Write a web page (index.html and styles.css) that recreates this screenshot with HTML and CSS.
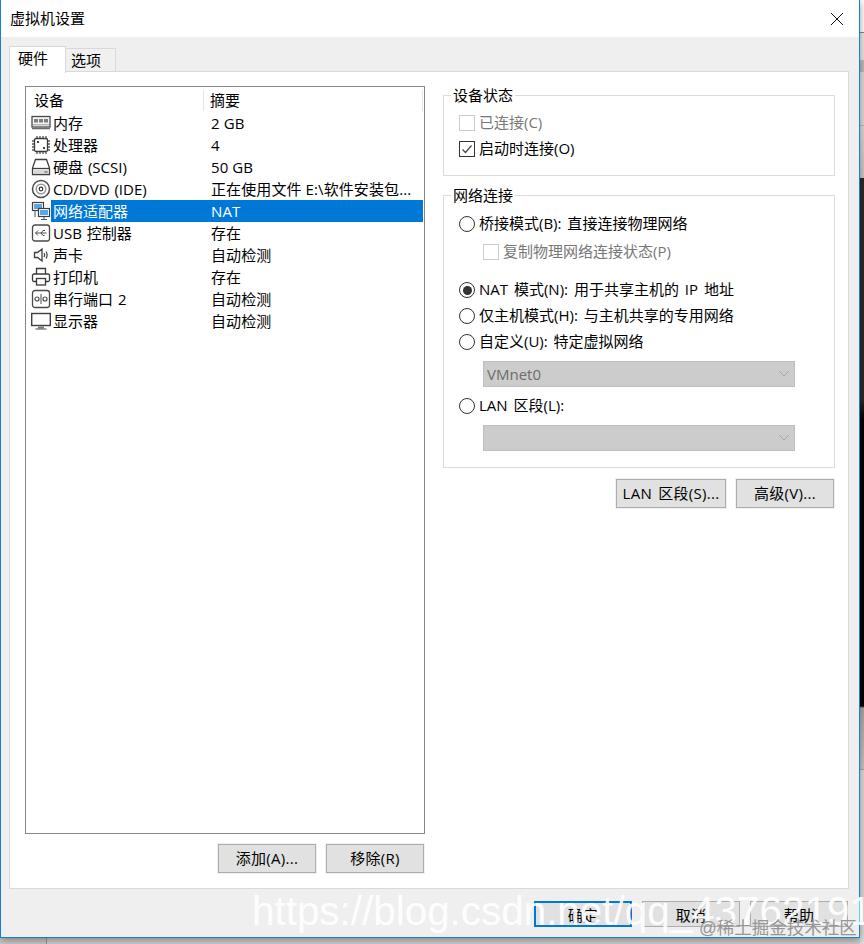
FILE: index.html
```html
<!DOCTYPE html>
<html lang="zh-CN">
<head>
<meta charset="utf-8">
<title>虚拟机设置</title>
<link rel="stylesheet" href="styles.css">
</head>
<body>
<div class="desktop">
  <main class="window">
    <header class="titlebar">
      <span class="title">虚拟机设置</span>
      <svg class="close" width="14" height="14" viewBox="0 0 14 14"><path d="M1 1L13 13M13 1L1 13" stroke="#111" stroke-width="1" fill="none"/></svg>
    </header>
    <div class="dialog">
      <div class="tabs">
        <span class="tab active">硬件</span>
        <span class="tab">选项</span>
      </div>
      <section class="panel">
        <div class="left">
          <div class="list">
            <div class="list-head">
              <span class="col-device">设备</span>
              <span class="col-summary">摘要</span>
            </div>
            <div class="row">
              <svg class="ic" viewBox="0 0 20 20"><rect x="1" y="3.500" width="18" height="10.500" fill="#f4f4f4" stroke="#4a4a4a" stroke-width="1.300"/><path d="M3 6h4v3.500H3zM8 6h4v3.500H8zM13 6h4v3.500h-4z" fill="#7d7d7d"/><path d="M2 11.800h16" stroke="#9a9a9a"/><path d="M1 15.500h18" stroke="#6a6a6a" stroke-width="1.500"/></svg>
              <span class="name">内存</span><span class="sum">2 GB</span>
            </div>
            <div class="row">
              <svg class="ic" viewBox="0 0 20 20"><rect x="3.500" y="3.500" width="13" height="13" rx="1.500" fill="#fff" stroke="#3a3a3a" stroke-width="1.300"/><path d="M6 1v2M9 1v2M12 1v2M15 1v2M6 17v2M9 17v2M12 17v2M15 17v2M1 6h2M1 9h2M1 12h2M1 15h2M17 6h2M17 9h2M17 12h2M17 15h2" stroke="#555" stroke-width="1.300"/><path d="M6 6h2v2H6zM12 12h2v2h-2z" fill="#444"/></svg>
              <span class="name">处理器</span><span class="sum">4</span>
            </div>
            <div class="row">
              <svg class="ic" viewBox="0 0 20 20"><path d="M4.500 2.500h11L18.500 11v6.500h-17V11z" fill="#fff" stroke="#3f3f3f" stroke-width="1.300"/><path d="M1.500 11.500h17" stroke="#3f3f3f" stroke-width="1.300"/><path d="M2.500 13h15v3.500h-15z" fill="#d8d8d8"/><path d="M13.500 15h3" stroke="#555"/></svg>
              <span class="name">硬盘 (SCSI)</span><span class="sum">50 GB</span>
            </div>
            <div class="row">
              <svg class="ic" viewBox="0 0 20 20"><circle cx="10" cy="10" r="8.500" fill="#fff" stroke="#4a4a4a" stroke-width="1.500"/><circle cx="10" cy="10" r="4.800" fill="none" stroke="#9a9a9a" stroke-width="1.500"/><circle cx="10" cy="10" r="1.800" fill="none" stroke="#333" stroke-width="1.200"/></svg>
              <span class="name">CD/DVD (IDE)</span><span class="sum">正在使用文件 E:\软件安装包...</span>
            </div>
            <div class="row selected">
              <svg class="ic" viewBox="0 0 20 20"><rect x="1.500" y="1.500" width="11" height="8" fill="#fff" stroke="#3f3f3f" stroke-width="1.200"/><rect x="3" y="3" width="8" height="5" fill="#5aa5e6"/><rect x="7.500" y="7.500" width="11" height="8" fill="#fff" stroke="#3f3f3f" stroke-width="1.200"/><rect x="9" y="9" width="8" height="5" fill="#5aa5e6"/><path d="M13 16v2M10 18.500h6M4 10v6" stroke="#555"/></svg>
              <span class="name">网络适配器</span><span class="sum">NAT</span>
            </div>
            <div class="row">
              <svg class="ic" viewBox="0 0 20 20"><rect x="1.500" y="2" width="17" height="16" rx="2.500" fill="#fff" stroke="#4a4a4a" stroke-width="1.300"/><path d="M4.500 10h11M7 7.500L4.500 10 7 12.500M10 10l2-2.500h2M10 10l2 2.500h1.500" fill="none" stroke="#4a4a4a"/></svg>
              <span class="name">USB 控制器</span><span class="sum">存在</span>
            </div>
            <div class="row">
              <svg class="ic" viewBox="0 0 20 20"><path d="M3.500 7.500h3L11 4v12l-4.500-3.500h-3z" fill="#fff" stroke="#3f3f3f" stroke-width="1.300"/><path d="M13 8c.8 1.300.8 2.700 0 4M15 6.500c1.500 2.300 1.500 4.700 0 7" fill="none" stroke="#3f3f3f" stroke-width="1.200"/></svg>
              <span class="name">声卡</span><span class="sum">自动检测</span>
            </div>
            <div class="row">
              <svg class="ic" viewBox="0 0 20 20"><path d="M5.500 7V1.500h9V7" fill="#fff" stroke="#3a3a3a" stroke-width="1.300"/><rect x="1.500" y="7" width="17" height="7.500" rx="1.500" fill="#fff" stroke="#3a3a3a" stroke-width="1.300"/><rect x="5.500" y="11.500" width="9" height="6.500" fill="#fff" stroke="#3a3a3a" stroke-width="1.300"/></svg>
              <span class="name">打印机</span><span class="sum">存在</span>
            </div>
            <div class="row">
              <svg class="ic" viewBox="0 0 20 20"><rect x="1.500" y="1.500" width="17" height="17" rx="2.500" fill="#fff" stroke="#4a4a4a" stroke-width="1.300"/><circle cx="6" cy="10" r="2" fill="none" stroke="#4a4a4a" stroke-width="1.200"/><circle cx="14" cy="10" r="2" fill="none" stroke="#4a4a4a" stroke-width="1.200"/><path d="M10 5v10" stroke="#4a4a4a"/></svg>
              <span class="name">串行端口 2</span><span class="sum">自动检测</span>
            </div>
            <div class="row">
              <svg class="ic" viewBox="0 0 20 20"><rect x=".7" y="2.500" width="18.600" height="12" fill="#fff" stroke="#3f3f3f" stroke-width="1.400"/><path d="M7 15.500h6v2H7z" fill="#777"/><path d="M4.500 18h11" stroke="#666" stroke-width="1.200"/></svg>
              <span class="name">显示器</span><span class="sum">自动检测</span>
            </div>
          </div>
          <div class="btn-row left-btns">
            <button class="btn">添加(A)...</button>
            <button class="btn">移除(R)</button>
          </div>
        </div>
        <div class="right">
          <div class="group status">
            <span class="legend">设备状态</span>
            <div class="opt off"><span class="box"></span>已连接(C)</div>
            <div class="opt"><span class="box">
              <svg width="14" height="14" viewBox="0 0 14 14"><path d="M2.500 7.500l3 3 6-7" fill="none" stroke="#444" stroke-width="1.200"/></svg></span>启动时连接(O)</div>
          </div>
          <div class="group network">
            <span class="legend">网络连接</span>
            <div class="opt"><span class="radio"></span>桥接模式(B): 直接连接物理网络</div>
            <div class="opt off sub"><span class="box"></span>复制物理网络连接状态(P)</div>
            <div class="opt nat"><span class="radio on"></span>NAT 模式(N): 用于共享主机的 IP 地址</div>
            <div class="opt"><span class="radio"></span>仅主机模式(H): 与主机共享的专用网络</div>
            <div class="opt"><span class="radio"></span>自定义(U): 特定虚拟网络</div>
            <div class="select"><span>VMnet0</span>
              <svg width="12" height="8" viewBox="0 0 12 8"><path d="M1 1l5 5 5-5" fill="none" stroke="#a6a6a6"/></svg></div>
            <div class="opt lan"><span class="radio"></span>LAN 区段(L):</div>
            <div class="select"><span></span>
              <svg width="12" height="8" viewBox="0 0 12 8"><path d="M1 1l5 5 5-5" fill="none" stroke="#a6a6a6"/></svg></div>
          </div>
          <div class="btn-row right-btns">
            <button class="btn wide">LAN 区段(S)...</button>
            <button class="btn">高级(V)...</button>
          </div>
        </div>
      </section>
      <footer class="footer">
        <button class="btn foot primary">确定</button>
        <button class="btn foot">取消</button>
        <button class="btn foot">帮助</button>
      </footer>
    </div>
  </main>
  <div class="strip-right"></div>
  <div class="strip-bottom"></div>
  <span class="wm-url">https://blog.csdn.net/qq_43762191</span>
  <span class="wm-juejin">@稀土掘金技术社区</span>
</div>
</body>
</html>
```
FILE: styles.css
```css
* { box-sizing: border-box; }
html, body { margin: 0; padding: 0; }
body {
  width: 864px;
  height: 944px;
  overflow: hidden;
  font-family: "Open Sans", "Noto Sans CJK SC", sans-serif;
  font-size: 15px;
  color: #000;
}
.desktop {
  position: relative;
  display: grid;
  grid-template-columns: 860px 4px;
  grid-template-rows: 938px 6px;
  width: 864px;
  height: 944px;
  overflow: hidden;
}
.window {
  position: relative;
  z-index: 1;
  display: flex;
  flex-direction: column;
  border: 1px solid #1a7fd4;
  border-top: 0;
  background: #efefef;
  box-shadow: 0 2px 8px rgba(0, 0, 0, .4);
}
.titlebar {
  display: flex;
  align-items: center;
  justify-content: space-between;
  height: 37px;
  padding: 0 15px 2px 9px;
  background: #fff;
}
.title { font-size: 15px; }
.close { display: block; margin-top: 3px; }
.dialog { flex: 1; display: flex; flex-direction: column; padding: 9px 10px 0 8px; }
.tabs { display: flex; align-items: flex-start; height: 26px; }
.tab {
  height: 24px;
  margin-top: 2px;
  padding: 0 5px;
  width: 50px;
  border: 1px solid #d9d9d9;
  border-bottom: 0;
  border-left: 0;
  line-height: 22px;
  font-size: 15px;
  background: #f0f0f0;
}
.tab.active {
  position: relative;
  z-index: 2;
  width: 57px;
  height: 27px;
  margin-top: 0;
  padding: 0 8px;
  border-left: 1px solid #d9d9d9;
  background: #fff;
  line-height: 22px;
}
.panel {
  display: flex;
  gap: 18px;
  height: 818px;
  margin-top: -1px;
  padding: 14px 13px 0 15px;
  border: 1px solid #d9d9d9;
  background: #fff;
}
.left { width: 400px; }
.list {
  height: 748px;
  border: 1px solid #828790;
  background: #fff;
}
.list-head {
  display: flex;
  height: 25px;
  line-height: 25px;
  padding-top: 1px;
}
.col-device { width: 178px; padding-left: 8px; border-right: 1px solid #e5e5e5; height: 21px; margin-top: 2px; line-height: 20px; }
.col-summary { flex: 1; padding-left: 6px; border-right: 1px solid #e5e5e5; height: 21px; margin-top: 2px; line-height: 20px; margin-right: 1px; }
.row { display: flex; align-items: center; height: 22px; line-height: 22px; padding-right: 1px; word-spacing: 1px; }
.ic { flex: none; width: 20px; height: 20px; margin: 0 0 0 5px; }
.name { flex: none; width: 159px; height: 22px; padding-left: 2px; white-space: nowrap; }
.sum { flex: 1; height: 22px; padding-left: 1px; white-space: nowrap; letter-spacing: .1px; word-spacing: 0; }
.row.selected .name, .row.selected .sum { background: #0078d7; color: #fff; }
.btn-row { display: flex; justify-content: flex-end; gap: 10px; }
.left-btns { margin-top: 10px; margin-right: 1px; }
.right-btns { margin-top: 11px; margin-right: 1px; }
.btn {
  width: 98px;
  height: 29px;
  padding: 0 0 3px;
  border: 1px solid #adadad;
  background: #e1e1e1;
  box-shadow: 0 0 0 1px #f0f0f0;
  font: inherit;
  letter-spacing: .3px;
  word-spacing: 2px;
  color: #000;
}
.btn.wide { width: 110px; }
.right { width: 392px; padding-top: 9px; }
.group { position: relative; border: 1px solid #dcdcdc; }
.status { height: 81px; padding-top: 14px; }
.network { height: 273px; margin-top: 19px; padding-top: 15px; }
.legend {
  position: absolute;
  top: -11px;
  left: 7px;
  padding: 0 2px;
  background: #fff;
  line-height: 20px;
}
.opt {
  display: flex;
  align-items: flex-start;
  gap: 4px;
  height: 26px;
  padding-left: 15px;
  line-height: 24px;
  word-spacing: 2px;
  white-space: nowrap;
}
.opt.off { color: #777; }
.sub { margin-top: 2px; padding-left: 39px; }
.nat { margin-top: 12px; }
.lan { margin-top: 6px; }
.box, .radio {
  display: flex;
  align-items: center;
  justify-content: center;
  flex: none;
  width: 16px;
  height: 16px;
  margin-top: 5px;
  border: 1px solid #333;
  background: #fff;
}
.off .box { border-color: #ccc; }
.radio { border-radius: 50%; }
.radio.on::after {
  content: "";
  width: 9px;
  height: 9px;
  border-radius: 50%;
  background: #333;
}
.select {
  display: flex;
  align-items: center;
  justify-content: space-between;
  width: 312px;
  height: 26px;
  margin: 6px 0 0 39px;
  padding: 0 4px 0 3px;
  border: 1px solid #bfbfbf;
  background: #cccccc;
  color: #6d6d6d;
}
.footer {
  display: flex;
  justify-content: flex-end;
  gap: 10px;
  margin-top: 12px;
  padding-right: 1px;
}
.foot { height: 26px; padding: 0; box-shadow: none; }
.foot.primary { border: 2px solid #0078d7; }
.strip-right {
  grid-row: 1 / 3;
  grid-column: 2;
  background: linear-gradient(to bottom,
    #fff 0, #fff 32px, #888 32px, #888 33px, #ececec 33px, #e8e8e8 60px, #bdbdbd 60px, #bdbdbd 72px,
    #dedede 72px, #dedede 125px, #bbb 125px, #bbb 126px, #dcdcdc 126px, #c8c8c8 178px,
    #2a2a2a 178px, #2a2a2a 400px, #000 420px, #000 706px, #aaa 708px, #c8c8c8 769px, #aaa 769px, #aaa 770px, #ddd 770px);
}
.strip-bottom {
  grid-row: 2;
  grid-column: 1;
  background: linear-gradient(to right, #c9c9c9 46px, #999 46px, #999 47px, #cfcfcf 47px);
}
.wm-url {
  position: absolute;
  z-index: 3;
  left: 252px;
  top: 886px;
  font-family: "Liberation Sans", sans-serif;
  font-size: 40.400px;
  line-height: 50px;
  color: rgba(255, 255, 255, .92);
  white-space: nowrap;
}
.wm-juejin {
  position: absolute;
  z-index: 3;
  left: 699px;
  top: 916px;
  font-family: "Liberation Sans", "Noto Sans CJK SC", sans-serif;
  font-size: 17.500px;
  line-height: 24px;
  color: #969696;
  white-space: nowrap;
}
```
